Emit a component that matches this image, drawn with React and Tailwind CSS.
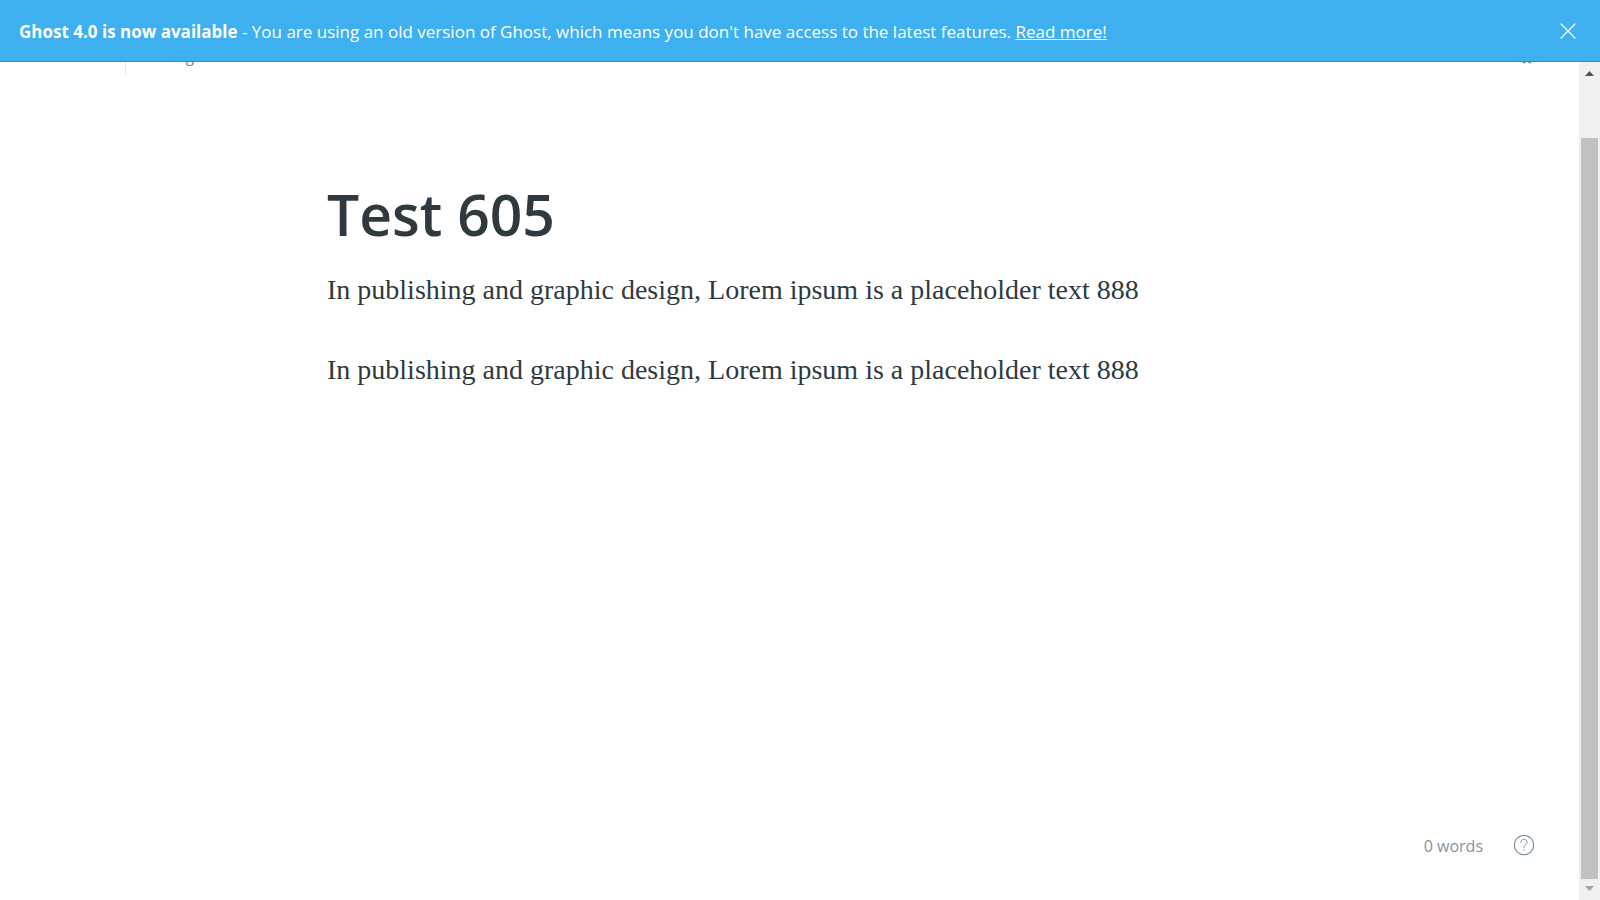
const PARAGRAPHS = [
  "In publishing and graphic design, Lorem ipsum is a placeholder text 888",
  "In publishing and graphic design, Lorem ipsum is a placeholder text 888",
];

function Banner() {
  return (
    <aside className="relative z-10 flex shrink-0 items-center justify-between border-b border-[#1b93dc] bg-[#3eb0ef] pt-[18px] pr-6 pb-4 pl-[19px] text-white">
      <p className="text-[17px] leading-[27px]">
        <strong className="font-bold">Ghost 4.0 is now available</strong> - You are using an old version of
        Ghost, which means you don't have access to the latest features.{" "}
        <a href="#read-more" className="underline">Read more!</a>
      </p>
      <button type="button" aria-label="Close" className="-mt-0.5 block">
        <svg className="size-4" viewBox="0 0 16 16" fill="none" stroke="currentColor" strokeWidth="1.2" strokeLinecap="round">
          <path d="M1 1l14 14M15 1L1 15" />
        </svg>
      </button>
    </aside>
  );
}

function EditorHeader() {
  return (
    <header className="-mt-4 flex h-7 shrink-0 items-start pr-[43px] pl-[125px] text-[#738a94]">
      <div className="h-[29px] border-l border-[#dfe9f1] pl-5 text-[15px] leading-5">Editing</div>
      <button type="button" aria-label="Settings" className="ml-auto block">
        <svg className="size-[18px]" viewBox="-9 -9 18 18" fill="none" stroke="currentColor">
          <circle r="6" strokeWidth="1.2" />
          <circle r="2.5" strokeWidth="1.2" />
          {[22.5, 67.5, 112.5, 157.5, 202.5, 247.5, 292.5, 337.5].map((angle) => (
            <path key={angle} d="M0 6V8.8" strokeWidth="3" transform={`rotate(${angle})`} />
          ))}
        </svg>
      </button>
    </header>
  );
}

function Scrollbar() {
  return (
    <div aria-hidden="true" className="flex w-[21px] shrink-0 flex-col items-center bg-[#f0f0f0]">
      <svg className="mt-[9px] h-[5px] w-[9px] shrink-0" viewBox="0 0 9 5" fill="#505050">
        <path d="M4.5 0L9 5H0z" />
      </svg>
      <div className="mt-[62px] w-[17px] flex-1 bg-[#c1c1c1]" />
      <svg className="mt-[7px] mb-[9px] h-[5px] w-[9px] shrink-0" viewBox="0 0 9 5" fill="#a3a3a3">
        <path d="M4.5 5L0 0h9z" />
      </svg>
    </div>
  );
}

export default function App() {
  return (
    <div className="flex h-screen flex-col bg-white font-['Segoe_UI','Open_Sans','Noto_Sans',sans-serif]">
      <Banner />
      <div className="flex min-h-0 flex-1">
        <div className="flex min-w-0 flex-1 flex-col">
          <EditorHeader />
          <main className="flex-1 px-[327px] pt-[100px] text-[#2f3940]">
            <h1 className="text-[57px] leading-[80px] font-semibold whitespace-nowrap">Test 605</h1>
            <div className="mt-4 space-y-10 font-['Liberation_Serif',serif] text-[28px] leading-10">
              {PARAGRAPHS.map((text, i) => (
                <p key={i} className="whitespace-nowrap">{text}</p>
              ))}
            </div>
          </main>
          <footer className="flex shrink-0 items-start justify-end gap-[30px] pr-11 pb-[42px] text-[#7f949e]">
            <span className="text-[16px] leading-6">0 words</span>
            <button type="button" aria-label="Help" className="block">
              <svg className="size-[22px]" viewBox="0 0 22 22" fill="none" stroke="currentColor" strokeLinecap="round" strokeLinejoin="round">
                <circle cx="11" cy="11" r="9.7" strokeWidth="1.2" />
                <path d="M7.8 8.4a3.1 3.1 0 1 1 4.7 2.5c-.9.6-1.5 1-1.5 2v.6" />
                <path d="M11 15.8v.4" strokeWidth="1.3" />
              </svg>
            </button>
          </footer>
        </div>
        <Scrollbar />
      </div>
    </div>
  );
}
